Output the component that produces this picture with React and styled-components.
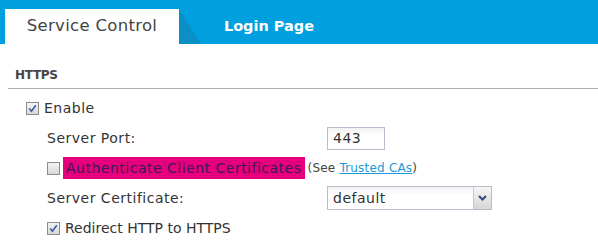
import React from 'react';
import styled, { createGlobalStyle } from 'styled-components';

const Global = createGlobalStyle`
  body {
    margin: 0;
    background: #fff;
    font-family: "DejaVu Sans", "Liberation Sans", sans-serif;
    color: #333;
  }
`;

const Page = styled.div`
  width: 598px;
  height: 247px;
  overflow: hidden;
`;

const TabBar = styled.div`
  height: 44px;
  box-sizing: border-box;
  background: #009fdf;
  padding: 9px 0 0 5px;
  display: flex;
  align-items: stretch;
`;

const Tab = styled.div`
  position: relative;
  width: ${p => p.$width}px;
  box-sizing: border-box;
  display: flex;
  align-items: center;
  justify-content: center;
  font-size: ${p => (p.$active ? '16.5px' : '14.5px')};
  letter-spacing: ${p => (p.$active ? '0.3px' : '0')};
  font-weight: ${p => (p.$active ? 'normal' : 'bold')};
  color: ${p => (p.$active ? '#444' : '#fff')};
  background: ${p => (p.$active ? '#fff' : 'transparent')};
  padding-bottom: 2px;

  ${p => p.$active && `
    &::after {
      content: '';
      position: absolute;
      left: 100%;
      top: 0;
      width: 22px;
      height: 100%;
      background: #0a8fc7;
      clip-path: polygon(0 0, 100% 100%, 0 100%);
    }
  `}
`;

const Body = styled.div`
  padding: 24px 0 0 8px;
`;

const Heading = styled.div`
  font-size: 12px;
  font-weight: bold;
  letter-spacing: -0.3px;
  color: #444;
  padding: 0 0 6px 7px;
  border-bottom: 1px solid #b0b0b0;
`;

const Rows = styled.div`
  display: flex;
  flex-direction: column;
  padding-top: 4px;
`;

const Row = styled.div`
  height: 30px;
  display: flex;
  align-items: center;
  padding-left: ${p => p.$indent}px;
  font-size: 14px;
  letter-spacing: ${p => (p.$tight ? '0' : '0.5px')};
  color: #333;
`;

const Label = styled.span`
  width: ${p => p.$width}px;
  flex: none;
`;

const Box = styled.span`
  width: 11px;
  height: 11px;
  flex: none;
  border: 1px solid #8c8c8c;
  background: linear-gradient(#f4f4f4, #d8d8d8);
  display: flex;
  align-items: center;
  justify-content: center;
  margin-right: 5px;
`;

const Highlight = styled.span`
  background: #e6007e;
  color: #3a1a55;
  padding: 3px 3px;
  margin-left: -2px;
`;

const Note = styled.span`
  font-size: 12px;
  letter-spacing: 0.2px;
  color: #444;
  margin-left: 3px;
`;

const Link = styled.a`
  color: #1a9ad6;
  text-decoration: underline;
`;

const Input = styled.div`
  width: 58px;
  height: 23px;
  box-sizing: border-box;
  border: 1px solid #b6bccb;
  background: linear-gradient(#f2f2f2, #fff 40%);
  padding-left: 5px;
  display: flex;
  align-items: center;
`;

const Select = styled.div`
  width: 165px;
  height: 24px;
  box-sizing: border-box;
  border: 1px solid #b6bccb;
  background: linear-gradient(#f2f2f2, #fff 40%);
  display: flex;
  align-items: stretch;
`;

const SelectText = styled.span`
  flex: 1;
  padding-left: 5px;
  display: flex;
  align-items: center;
`;

const SelectButton = styled.span`
  width: 17px;
  border-left: 1px solid #c4c8d2;
  background: linear-gradient(#f6f6f6, #d6d6d6);
  display: flex;
  align-items: center;
  justify-content: center;
`;

const Check = ({ checked }) => (
  <Box>
    {checked && (
      <svg width="9" height="9" viewBox="0 0 9 9">
        <path d="M1.2 4.6 L3.4 7.2 L7.8 1.2" fill="none" stroke="#3b5ba8" strokeWidth="1.6" />
      </svg>
    )}
  </Box>
);

export default function App() {
  return (
    <Page>
      <Global />
      <TabBar>
        <Tab $active $width={174}>Service Control</Tab>
        <Tab $width={180}>Login Page</Tab>
      </TabBar>
      <Body>
        <Heading>HTTPS</Heading>
        <Rows>
          <Row $indent={18}>
            <Check checked />
            Enable
          </Row>
          <Row $indent={39}>
            <Label $width={280}>Server Port:</Label>
            <Input>443</Input>
          </Row>
          <Row $indent={39}>
            <Check />
            <Highlight>Authenticate Client Certificates</Highlight>
            <Note>(See <Link href="#">Trusted CAs</Link>)</Note>
          </Row>
          <Row $indent={39}>
            <Label $width={280}>Server Certificate:</Label>
            <Select>
              <SelectText>default</SelectText>
              <SelectButton>
                <svg width="9" height="6" viewBox="0 0 9 6">
                  <path d="M1 1 L4.5 4.5 L8 1" fill="none" stroke="#2c4a86" strokeWidth="2" />
                </svg>
              </SelectButton>
            </Select>
          </Row>
          <Row $indent={39} $tight>
            <Check checked />
            Redirect HTTP to HTTPS
          </Row>
        </Rows>
      </Body>
    </Page>
  );
}
